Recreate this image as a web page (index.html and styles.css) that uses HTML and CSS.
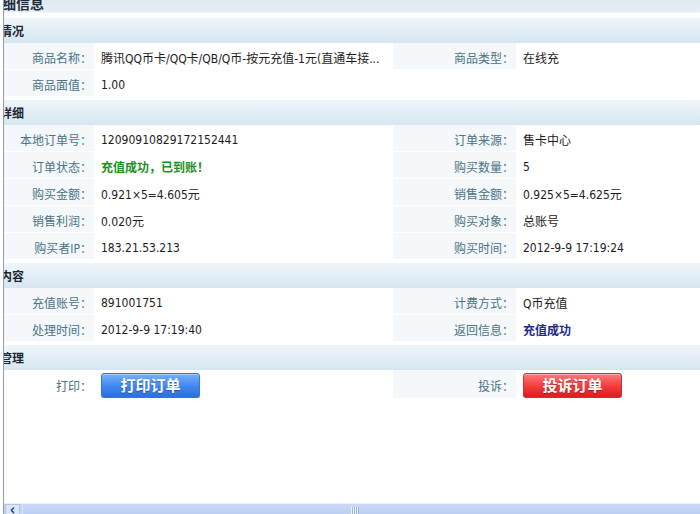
FILE: index.html
```html
<!DOCTYPE html>
<html lang="zh-CN">
<head>
    <meta charset="UTF-8">
    <meta name="viewport" content="width=device-width, initial-scale=1.0">
    <title>订单详细信息</title>
    <link rel="stylesheet" href="styles.css">
</head>
<body>
    <div class="frame">
        <div class="viewport">
            <div class="page">
                <div class="title">订单详细信息</div>

                <table class="info">
                    <colgroup><col class="c1"><col class="c2"><col class="c3"><col class="c4"></colgroup>
                    <tr class="head"><th colspan="4">基本情况</th></tr>
                    <tr>
                        <td class="label">商品名称：</td>
                        <td class="value">腾讯QQ币卡/QQ卡/QB/Q币-按元充值-1元(直通车接...</td>
                        <td class="label">商品类型：</td>
                        <td class="value">在线充</td>
                    </tr>
                    <tr>
                        <td class="label">商品面值：</td>
                        <td class="value">1.00</td>
                        <td class="value"></td>
                        <td class="value"></td>
                    </tr>
                </table>

                <table class="info">
                    <colgroup><col class="c1"><col class="c2"><col class="c3"><col class="c4"></colgroup>
                    <tr class="head"><th colspan="4">订单详细</th></tr>
                    <tr>
                        <td class="label">本地订单号：</td>
                        <td class="value">12090910829172152441</td>
                        <td class="label">订单来源：</td>
                        <td class="value">售卡中心</td>
                    </tr>
                    <tr>
                        <td class="label">订单状态：</td>
                        <td class="value"><span class="ok">充值成功，已到账！</span></td>
                        <td class="label">购买数量：</td>
                        <td class="value">5</td>
                    </tr>
                    <tr>
                        <td class="label">购买金额：</td>
                        <td class="value">0.921×5=4.605元</td>
                        <td class="label">销售金额：</td>
                        <td class="value">0.925×5=4.625元</td>
                    </tr>
                    <tr>
                        <td class="label">销售利润：</td>
                        <td class="value">0.020元</td>
                        <td class="label">购买对象：</td>
                        <td class="value">总账号</td>
                    </tr>
                    <tr>
                        <td class="label">购买者IP：</td>
                        <td class="value">183.21.53.213</td>
                        <td class="label">购买时间：</td>
                        <td class="value">2012-9-9 17:19:24</td>
                    </tr>
                </table>

                <table class="info">
                    <colgroup><col class="c1"><col class="c2"><col class="c3"><col class="c4"></colgroup>
                    <tr class="head"><th colspan="4">充值内容</th></tr>
                    <tr>
                        <td class="label">充值账号：</td>
                        <td class="value">891001751</td>
                        <td class="label">计费方式：</td>
                        <td class="value">Q币充值</td>
                    </tr>
                    <tr>
                        <td class="label">处理时间：</td>
                        <td class="value">2012-9-9 17:19:40</td>
                        <td class="label">返回信息：</td>
                        <td class="value"><span class="done">充值成功</span></td>
                    </tr>
                </table>

                <table class="info">
                    <colgroup><col class="c1"><col class="c2"><col class="c3"><col class="c4"></colgroup>
                    <tr class="head"><th colspan="4">订单管理</th></tr>
                    <tr class="actions">
                        <td class="label plain">打印：</td>
                        <td class="value"><button class="btn btn-blue">打印订单</button></td>
                        <td class="label">投诉：</td>
                        <td class="value"><button class="btn btn-red">投诉订单</button></td>
                    </tr>
                </table>
            </div>
        </div>

        <div class="hscroll">
            <div class="arrow">‹</div>
            <div class="thumb"><span class="grip"></span></div>
        </div>
    </div>
</body>
</html>
```

FILE: styles.css
```css
body {
    margin: 0;
    padding: 0;
    background-color: #fff;
    font-family: "DejaVu Sans Condensed", "DejaVu Sans", "Noto Sans CJK SC", sans-serif;
    font-size: 12px;
    color: #1c1c1c;
    overflow: hidden;
}

.frame {
    margin-left: 3px;
    height: 514px;
    border-left: 1px solid #8f9eae;
    display: flex;
    flex-direction: column;
    overflow: hidden;
}

.viewport {
    height: 503px;
    overflow: hidden;
    flex: none;
}

.page {
    width: 880px;
    margin-left: -56px;
}

.title {
    margin-top: -13px;
    height: 25px;
    line-height: 34px;
    padding-left: 12px;
    font-size: 14px;
    font-weight: bold;
    color: #1d2b38;
    background: linear-gradient(#d9e5ef, #e6eef5);
    border-bottom: 1px solid #f2f6fa;
    margin-bottom: 5px;
    overflow: hidden;
}

table.info {
    width: 880px;
    table-layout: fixed;
    border-collapse: collapse;
    margin-bottom: 3px;
}

col.c1 { width: 146px; }
col.c2 { width: 299px; }
col.c3 { width: 123px; }
col.c4 { width: 312px; }

table.info th {
    height: 25px;
    padding: 0 0 0 28px;
    text-align: left;
    font-size: 12px;
    font-weight: bold;
    color: #1d2630;
    background: linear-gradient(#eff6fa, #d6e6f0);
}

table.info td {
    height: 23px;
    padding: 3px 0 0;
    border-bottom: 1px solid #fff;
    white-space: nowrap;
    overflow: hidden;
}

table.info td.label {
    text-align: right;
    padding-right: 2px;
    color: #4b7383;
    background-color: #f4f8fb;
}

table.info td.value {
    padding-left: 7px;
    background-color: #fff;
}

.ok {
    color: #1b8f1b;
    font-weight: bold;
}

.done {
    color: #1c2a8c;
    font-weight: bold;
}

.actions td {
    height: 27px;
    padding-top: 0;
}

table.info td.plain {
    background-color: #fff;
}

.btn {
    width: 99px;
    height: 25px;
    margin: 0;
    padding: 0 0 4px;
    border-radius: 3px;
    font-family: "Noto Sans CJK SC", sans-serif;
    font-size: 15px;
    font-weight: bold;
    color: #fff;
    cursor: pointer;
    text-shadow: 0 1px 1px rgba(0, 0, 0, 0.35);
    vertical-align: middle;
}

.btn-blue {
    border: 1px solid #3d73c8;
    background: linear-gradient(#74b2fb, #3f86ef 55%, #2c6ee0);
    box-shadow: inset 0 1px 0 #a8d0ff, 0 1px 1px #9fb4d4;
}

.btn-red {
    border: 1px solid #c73636;
    background: linear-gradient(#ff7b7b, #f33a3a 55%, #de1c1c);
    box-shadow: inset 0 1px 0 #ffb0b0, 0 1px 1px #d0a8a8;
}

.hscroll {
    flex: none;
    height: 11px;
    display: flex;
    background-color: #c5d5f5;
    border-top: 1px solid #e9eef8;
}

.arrow {
    width: 13px;
    margin-left: 1px;
    line-height: 11px;
    text-align: center;
    font-size: 15px;
    font-weight: bold;
    color: #23407a;
    background-color: #dbe6fa;
    border: 1px solid #b1c4ea;
    border-bottom: none;
}

.thumb {
    flex: 1;
    margin-left: 2px;
    background: linear-gradient(#cad9f7, #bccff3);
    border-left: 1px solid #d7e2f8;
    display: flex;
    justify-content: center;
}

.grip {
    width: 8px;
    margin-top: 3px;
    margin-right: 14px;
    background: repeating-linear-gradient(90deg, #eef3fc 0 1px, #9fb3da 1px 2px);
}
```
